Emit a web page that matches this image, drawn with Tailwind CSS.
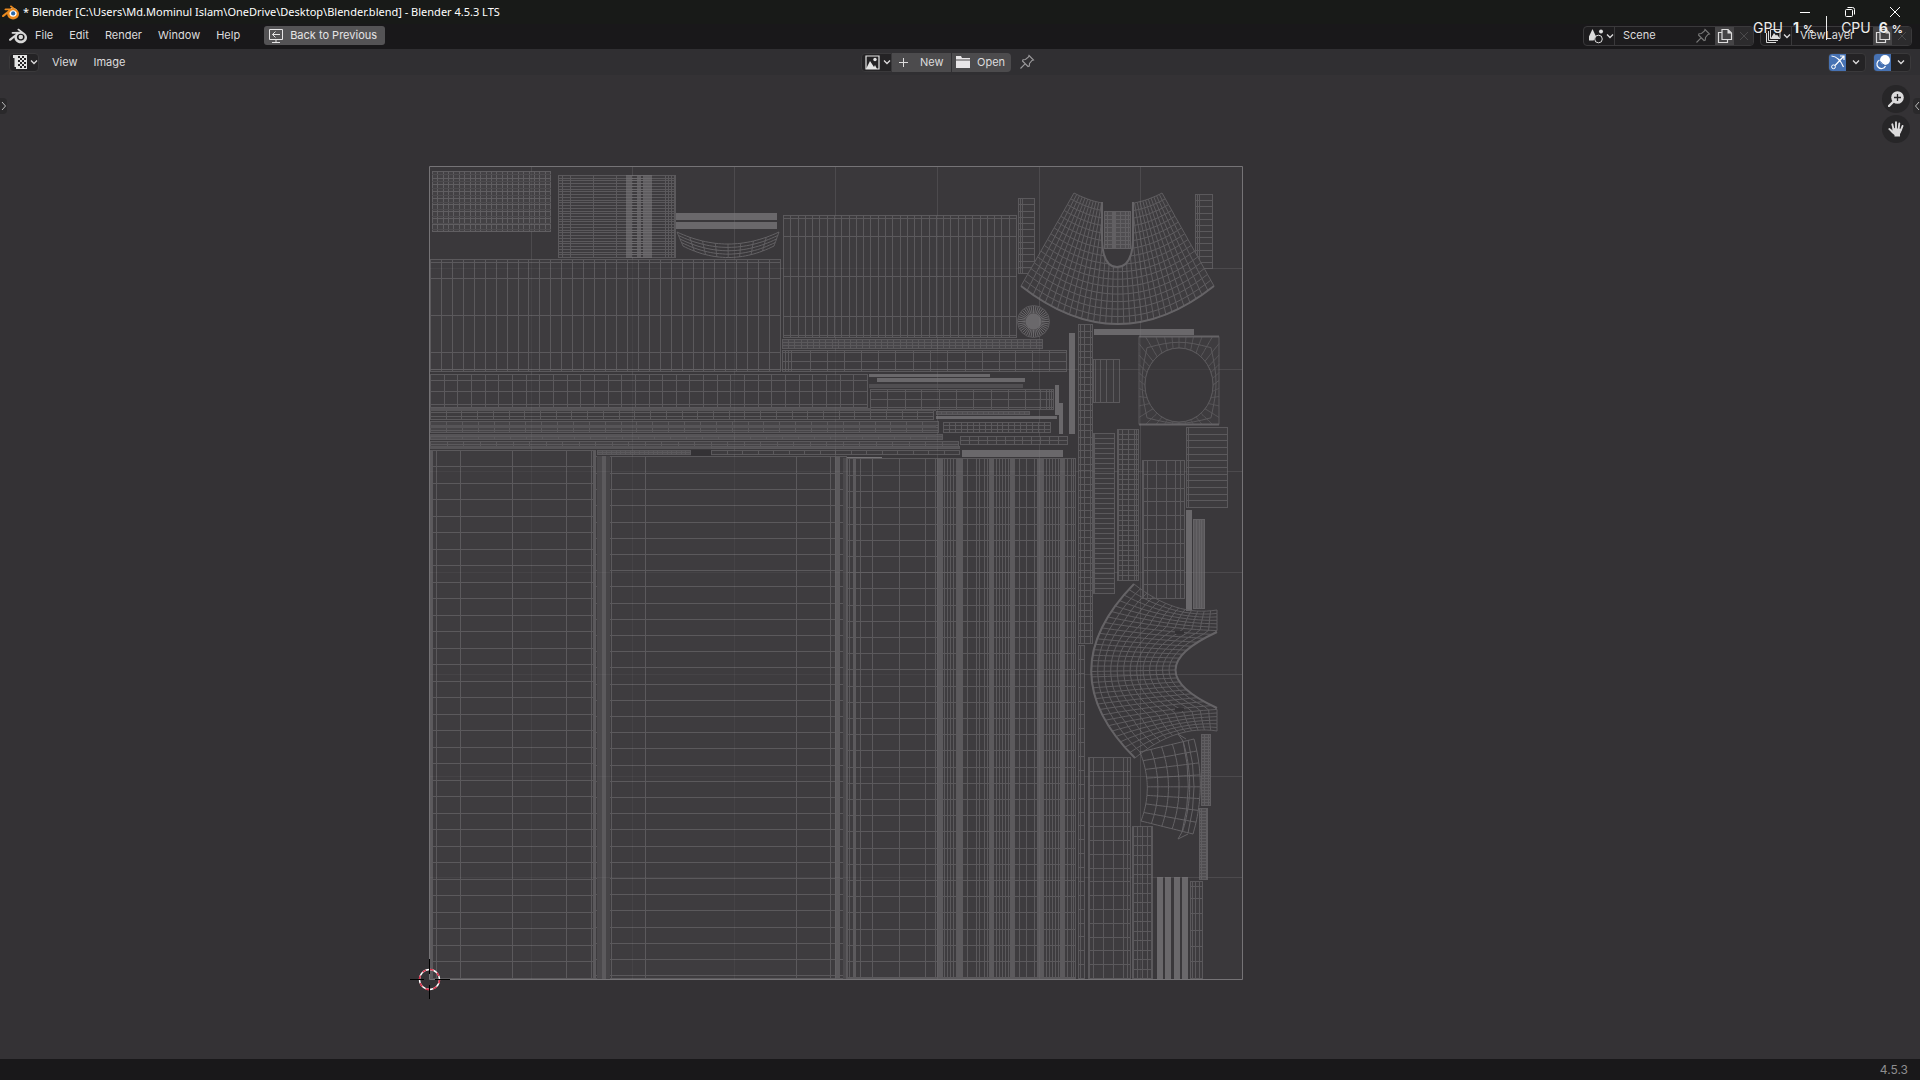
<!DOCTYPE html>
<html lang="en">
<head>
<meta charset="utf-8">
<title>Blender</title>
<script src="https://cdn.jsdelivr.net/npm/@tailwindcss/browser@4"></script>
</head>
<body class="flex h-screen flex-col overflow-hidden bg-[#343235] font-['Inter',sans-serif] text-[11px] text-[#dddcdd]">

<svg class="hidden">
  <defs>
    <symbol id="blender" viewBox="0 0 24 24"><path d="M7.35 14.831c.006.314.106.922.256 1.398a7.372 7.372 0 0 0 1.593 2.757 8.227 8.227 0 0 0 2.787 2.001 8.947 8.947 0 0 0 3.66.76 8.964 8.964 0 0 0 3.657-.772 8.285 8.285 0 0 0 2.785-2.01 7.428 7.428 0 0 0 1.592-2.762 6.964 6.964 0 0 0 .25-3.074 7.123 7.123 0 0 0-1.016-2.779 7.764 7.764 0 0 0-1.852-2.043L13.566 2.55c-.492-.378-1.339-.391-1.88-.013-.547.382-.609 1.015-.123 1.415l3.125 2.544-9.543.01c-.788.001-1.545.518-1.695 1.172-.154.665.38 1.217 1.2 1.22l4.83-.008-8.654 6.642c-.813.622-1.075 1.658-.563 2.315.52.667 1.625.668 2.447.004L7.414 14s-.069.52-.063.831zm12.09 1.741c-.97.988-2.326 1.548-3.795 1.55-1.47.004-2.827-.552-3.797-1.538a4.51 4.51 0 0 1-1.036-1.622 4.282 4.282 0 0 1 .282-3.519 4.702 4.702 0 0 1 1.153-1.371c.942-.768 2.141-1.183 3.396-1.185 1.256-.002 2.455.41 3.398 1.175.48.391.87.854 1.152 1.367a4.28 4.28 0 0 1 .522 1.706 4.236 4.236 0 0 1-.239 1.811 4.54 4.54 0 0 1-1.035 1.626" fill="currentColor"/><circle cx="15.75" cy="13.3" r="3" fill="var(--eye, currentColor)"/></symbol>
    <symbol id="chev" viewBox="0 0 8 8"><path d="M1 2.500 4 5.500 7 2.500" fill="none" stroke="currentColor" stroke-width="1.300"/></symbol>
    <symbol id="pin" viewBox="0 0 16 16"><path d="M10 1.500 14.500 6 13 6.500 10.500 9.500 10.300 12 9 12.500 3.500 7 4 5.700 6.500 5.500 9.500 3ZM5.800 10.200 1.500 14.500" fill="none" stroke="currentColor" stroke-width="1.100"/></symbol>
    <symbol id="copy" viewBox="0 0 16 16"><path d="M4.500 4.500H1.500V14.500H10.500V12M5 1.500H11L14.500 5V11.500H5Z" fill="none" stroke="currentColor" stroke-width="1.200"/><path d="M10.500 1V5.500H15Z" fill="currentColor"/></symbol>
    <symbol id="cross" viewBox="0 0 16 16"><path d="M4 4 12 12M12 4 4 12" stroke="currentColor" stroke-width="1"/></symbol>
  </defs>
</svg>

<div class="flex h-6 shrink-0 items-center bg-[#181a18] pr-5 pl-0.5 text-white">
  <svg class="size-[17px] text-[#ea8a1e] [--eye:#2a68a8]"><circle cx="11" cy="9" r="5" fill="#fff"/><use href="#blender"/></svg>
  <h1 class="ml-1 text-[11px] leading-6 font-['Noto_Sans',sans-serif]">* Blender [C:\Users\Md.Mominul Islam\OneDrive\Desktop\Blender.blend] - Blender 4.5.3 LTS</h1>
  <div class="ml-auto flex items-center gap-[35px]">
    <button aria-label="Minimize"><svg class="size-2.5" viewBox="0 0 10 10"><path d="M0 5.500H10" stroke="#fff"/></svg></button>
    <button aria-label="Restore"><svg class="size-2.5" viewBox="0 0 10 10"><path d="M.5 3.500Q.5 2.500 1.500 2.500H6.500Q7.500 2.500 7.500 3.500V8.500Q7.500 9.500 6.500 9.500H1.500Q.5 9.500.5 8.500ZM2.500.5H7.500Q9.500.5 9.500 2.500V7.500" fill="none" stroke="#fff"/></svg></button>
    <button aria-label="Close"><svg class="size-2.5" viewBox="0 0 10 10"><path d="M0 0 10 10M10 0 0 10" stroke="#fff"/></svg></button>
  </div>
</div>

<header class="flex h-[25px] shrink-0 items-center bg-[#19181a] pr-2 pb-0.5 pl-[9px]">
  <button aria-label="Blender menu"><svg class="size-[18px] text-[#d8d8d8]"><use href="#blender"/></svg></button>
  <nav class="ml-2 flex gap-4">
    <button>File</button><button>Edit</button><button>Render</button><button>Window</button><button>Help</button>
  </nav>
  <button class="ml-6 flex h-[19px] items-center gap-1.5 rounded-[3px] bg-[#545355] pr-2 pl-1 text-[#e6e5e6]">
    <svg class="size-4" viewBox="0 0 16 16"><path d="M1.500 1.500H14.500V11.500H1.500ZM8 11.500V14M4 14.500H12M12 6.500H4.500M7.500 3.500 4.500 6.500 7.500 9.500" fill="none" stroke="currentColor"/></svg>
    Back to Previous</button>
  <div class="ml-auto flex h-5 w-[171px] overflow-hidden rounded border border-[#3a393b] bg-[#1d1c1e]">
    <button class="flex w-[31px] shrink-0 items-center gap-0.5 border-r border-[#3a393b] pl-1" aria-label="Browse scene">
      <svg class="size-4" viewBox="0 0 16 16"><path d="M4.500 1 8 8.500 5.500 12.500H1L1 8.500Z" fill="#ddd"/><circle cx="13" cy="3.500" r="2" fill="#ddd"/><circle cx="10.500" cy="11" r="3.800" fill="#1d1c1e" stroke="#ddd"/></svg>
      <svg class="size-2"><use href="#chev"/></svg></button>
    <input class="w-[72px] min-w-0 grow bg-transparent pl-2 outline-none" aria-label="Scene" value="Scene">
    <button class="mr-1 text-[#777]" aria-label="Pin scene"><svg class="size-4"><use href="#pin"/></svg></button>
    <button class="flex w-[19px] items-center justify-center bg-[#454446]" aria-label="New scene"><svg class="size-4"><use href="#copy"/></svg></button>
    <button class="flex w-[19px] items-center justify-center bg-[#2c2b2d] text-[#4b4a4c]" aria-label="Delete scene"><svg class="size-4"><use href="#cross"/></svg></button>
  </div>
  <div class="ml-1.5 flex h-5 w-[152px] overflow-hidden rounded border border-[#3a393b] bg-[#1d1c1e]">
    <button class="flex w-[31px] shrink-0 items-center gap-0.5 border-r border-[#3a393b] pl-1" aria-label="Browse view layer">
      <svg class="size-4" viewBox="0 0 16 16"><path d="M1.500 5V14.500H11M3.500 3V12.500H13M5.500 1.500H15V10.500H5.500Z" fill="none" stroke="#ddd"/><path d="M6 10 9 5 11 7.500 12 6.500 14.500 10Z" fill="#ddd"/></svg>
      <svg class="size-2"><use href="#chev"/></svg></button>
    <input class="w-[72px] min-w-0 grow bg-transparent pl-2 outline-none" aria-label="View layer" value="ViewLayer">
    <button class="flex w-[19px] items-center justify-center bg-[#454446]" aria-label="New view layer"><svg class="size-4"><use href="#copy"/></svg></button>
    <button class="flex w-[19px] items-center justify-center bg-[#2c2b2d] text-[#4b4a4c]" aria-label="Delete view layer"><svg class="size-4"><use href="#cross"/></svg></button>
  </div>
</header>

<div class="flex h-[26px] shrink-0 items-center bg-[#302f32] px-[9px]">
  <div class="flex flex-1 items-center">
    <button class="flex h-[19px] w-[30px] items-center gap-0.5 rounded border border-[#3a393b] bg-[#242325] pl-0.5" aria-label="Editor type">
      <svg class="size-4" viewBox="0 0 16 16"><path d="M1 1H15V15H4V13H2.500V4H1Z" fill="#e4e4e4"/><path d="M6 2H8V4H6ZM10 2H12V4H10ZM8 4H10V6H8ZM12 4H14V6H12ZM6 6H8V8H6ZM10 6H12V8H10ZM8 8H10V10H8ZM12 8H14V10H12ZM6 10H8V12H6ZM10 10H12V12H10ZM8 12H10V14H8ZM12 12H14V14H12Z" fill="#242325"/></svg>
      <svg class="size-2"><use href="#chev"/></svg></button>
    <button class="ml-[13px]">View</button>
    <button class="ml-4">Image</button>
  </div>
  <div class="mr-6 flex items-center">
    <button class="flex h-[19px] w-[31px] items-center gap-[3px] rounded-l border border-[#3a393b] bg-[#242325] pl-[3px]" aria-label="Browse image">
      <svg class="size-[15px]" viewBox="0 0 15 15"><path d="M1 1H14V14H1Z" fill="none" stroke="#e4e4e4" stroke-width="1.200"/><path d="M1 14 5 6 9 12 10 10 12 14Z" fill="#e4e4e4"/><circle cx="10" cy="4.500" r="1.700" fill="#e4e4e4"/></svg>
      <svg class="size-2"><use href="#chev"/></svg></button>
    <button class="flex h-[19px] w-[59px] items-center gap-3 bg-[#4c4b4d] pl-[7px]"><svg class="size-[9px] shrink-0" viewBox="0 0 9 9"><path d="M0 4.500H9M4.500 0V9" stroke="currentColor"/></svg>New</button>
    <button class="ml-px flex h-[19px] w-[59px] items-center gap-[7px] rounded-r bg-[#4c4b4d] pl-1"><svg class="h-3 w-3.5 shrink-0" viewBox="0 0 14 12"><path d="M0 0H5L6 2H14V3.500H0ZM0 4.500H14V12H0Z" fill="#e8e6e8"/></svg>Open</button>
    <button class="ml-2 text-[#9a999b]" aria-label="Pin image"><svg class="size-4"><use href="#pin"/></svg></button>
  </div>
  <div class="flex flex-1 items-center justify-end gap-[7px]">
    <div class="flex h-[19px] w-[38px] overflow-hidden rounded border border-[#3a393b] bg-[#242325]">
      <button class="flex w-[17px] items-center justify-center bg-[#4772b3] text-white" aria-label="Show gizmos"><svg class="size-4" viewBox="0 0 16 16"><path d="M1.500 2Q9 2.500 13.500 13M5 11.500 14 2M10 2H14V6" fill="none" stroke="currentColor" stroke-width="1.200"/><circle cx="3.500" cy="12.800" r="1.900" fill="none" stroke="currentColor"/></svg></button>
      <button class="flex grow items-center justify-center" aria-label="Gizmo options"><svg class="size-2"><use href="#chev"/></svg></button>
    </div>
    <div class="flex h-[19px] w-[38px] overflow-hidden rounded border border-[#3a393b] bg-[#242325]">
      <button class="flex w-[17px] items-center justify-center bg-[#4772b3] text-white" aria-label="Show overlays"><svg class="size-4" viewBox="0 0 16 16"><circle cx="10" cy="6" r="5" fill="currentColor"/><path d="M4.500 6A4.500 4.500 0 1 0 10.500 12" fill="none" stroke="currentColor" stroke-width="1.200"/><path d="M5.500 7.500Q7 10.500 9.500 11" fill="none" stroke="#4772b3"/></svg></button>
      <button class="flex grow items-center justify-center" aria-label="Overlay options"><svg class="size-2"><use href="#chev"/></svg></button>
    </div>
  </div>
</div>

<main class="relative min-h-0 grow">
  <svg id="uv" class="block size-full" viewBox="0 75 1920 984" preserveAspectRatio="xMidYMid meet" role="img" aria-label="UV layout"></svg>
  <button class="absolute top-[23px] left-0 flex h-4 w-[7px] items-center justify-center rounded-r bg-[#2a292b]" aria-label="Show toolbar"><svg class="h-2 w-1.5" viewBox="0 0 6 8"><path d="M1 0 4.500 4 1 8" fill="none" stroke="#bbb"/></svg></button>
  <button class="absolute top-[23px] right-0 flex h-4 w-[7px] items-center justify-center rounded-l bg-[#2a292b]" aria-label="Show sidebar"><svg class="h-2 w-1.5" viewBox="0 0 6 8"><path d="M5 0 1.500 4 5 8" fill="none" stroke="#bbb"/></svg></button>
  <div class="absolute top-2.5 right-2.5 flex flex-col gap-0.5">
    <button class="flex size-7 items-center justify-center rounded-full bg-[#272628]" aria-label="Zoom view"><svg class="size-4" viewBox="0 0 16 16"><circle cx="9.500" cy="6.500" r="6.300" fill="#dcdbdc"/><path d="M5.500 10.500 1 15" stroke="#dcdbdc" stroke-width="2.400" stroke-linecap="round"/><path d="M6 6.500H13M9.500 3V10" stroke="#272628" stroke-width="1.300"/></svg></button>
    <button class="flex size-7 items-center justify-center rounded-full bg-[#272628]" aria-label="Move view"><svg class="size-4" viewBox="0 0 16 16"><path d="M5.500 8 4.300 3.300M8 8V1.300M10.600 8 11.300 2.500M13 9 14.500 5M5 11 1.300 8" stroke="#dcdbdc" stroke-width="1.900" stroke-linecap="round"/><path d="M4.500 7 13.800 8Q13.500 11.500 12 13V15.500H6.500V14Q3.500 12 2 9.500L4.500 10Z" fill="#dcdbdc"/></svg></button>
  </div>
</main>

<footer class="flex h-[21px] shrink-0 items-center justify-end bg-[#19181a] pr-3 text-xs text-[#8e8d8f]">4.5.3</footer>

<div class="pointer-events-none absolute top-4 right-[17px] flex h-6 items-center text-sm text-[#ededed] text-shadow-sm">
  <span>GPU</span><span class="ml-2.5 font-bold">1<span class="ml-1 text-[11px]">%</span></span>
  <span class="mr-3.5 ml-3 h-6 w-px bg-[#ededed]"></span>
  <span>CPU</span><span class="ml-2 font-bold">6<span class="ml-1 text-[11px]">%</span></span>
</div>

<script>
const LINE = '#5b595c', BRIGHT = '#6a686b', MID = '#504e51', BASE = '#3a383b', FACE = '#3e3c3f';
const out = [];
const rect = (x0, y0, x1, y1, fill) => out.push(`<path d="M${x0} ${y0}H${x1}V${y1}H${x0}Z" fill="${fill}" shape-rendering="crispEdges"/>`);
const path = (d, stroke = LINE, w = 1) => out.push(`<path d="${d}" fill="none" stroke="${stroke}" stroke-width="${w}"/>`);
const split = (a, b, n) => Array.from({ length: n + 1 }, (_, i) => Math.round(a + (b - a) * i / n));

// Rectangular island: face fill, then vertical edges at xs and horizontal edges at ys.
function island(x0, y0, x1, y1, xs, ys, fill = FACE, stroke = LINE) {
  rect(x0, y0, x1, y1, fill);
  const v = typeof xs === 'number' ? split(x0, x1 - 1, xs) : [x0, ...xs, x1 - 1];
  const h = typeof ys === 'number' ? split(y0, y1 - 1, ys) : [y0, ...ys, y1 - 1];
  path(v.map(x => `M${x + .5} ${y0}V${y1}`).join('') + h.map(y => `M${x0} ${y + .5}H${x1}`).join(''), stroke);
}
// Curved island: f(u, v) gives a point; nu and nv are the cell counts.
function patch(f, nu, nv, stroke = '#646265') {
  const pts = (g, n) => 'M' + Array.from({ length: n + 1 }, (_, i) => g(i / n).map(c => c.toFixed(1)).join(' ')).join('L');
  let d = '';
  for (let i = 0; i <= nu; i++) d += pts(t => f(i / nu, t), 16);
  for (let j = 0; j <= nv; j++) d += pts(t => f(t, j / nv), 32);
  path(d, stroke, 1);
}
const mix = (a, b, t) => [a[0] + (b[0] - a[0]) * t, a[1] + (b[1] - a[1]) * t];
const bez = (a, c, b) => t => mix(mix(a, c, t), mix(c, b, t), t);

// Image bounds and background grid
rect(429, 166, 1243, 980, BASE);
for (let i = 1; i < 8; i++) {
  const o = Math.round(i * 101.6) + .5;
  path(`M${429 + o} 166V979M430 ${166 + o}H1242`, '#454346');
}

// Top row
island(432, 171, 551, 232, 22, 9, '#434144', '#605e61');
path([174, 181, 188, 195, 202, 209, 216, 223, 229].map(y => `M432 ${y}.5H551`).join(''), '#4d4b4e');
island(558, 175, 676, 258, [562, 570, 593, 616, 665, 668, 671, 674], 30);
[[626, 632], [637, 641], [643, 652]].forEach(b => rect(b[0], 175, b[1], 258, '#605e61'));
path(split(175, 257, 30).map(y => `M626 ${y}.5H652`).join(''), '#6c6a6d');
rect(676, 213, 777, 220, BRIGHT);
rect(676, 222, 777, 229, BRIGHT);
{
  const a = bez([677, 232], [728, 256], [779, 232]), b = bez([683, 246], [728, 269], [774, 246]);
  patch((u, v) => mix(a(u), b(u), v), 8, 4);
}
island(430, 259, 781, 372, 32, [262, 278, 315, 352, 369]);
island(783, 215, 1017, 338, 32, [218, 236, 276, 316, 335]);
island(1018, 198, 1035, 274, [1020, 1022], 12);
island(1195, 194, 1213, 269, [1197, 1199], 12);

// Cap
out.push(`<circle cx="1033.5" cy="321.5" r="16" fill="${FACE}" stroke="${LINE}"/><circle cx="1033.5" cy="321.5" r="8" fill="${BRIGHT}"/>`);
{
  let d = '';
  for (let i = 0; i < 40; i++) { const a = i * Math.PI / 20, c = Math.cos(a), s = Math.sin(a); d += `M${1033.5 + 8 * c} ${321.5 + 8 * s}L${1033.5 + 15.5 * c} ${321.5 + 15.5 * s}`; }
  path(d, '#6a686b');
}

// Collar fan with its cut-out
{
  const top = bez([1074, 193], [1118, 216], [1162, 193]), hem = bez([1021, 286], [1118, 362], [1214, 286]);
  out.push(`<path d="M1074 193L1021 286Q1118 362 1214 286L1162 193Q1118 216 1074 193Z" fill="${FACE}"/>`);
  patch((u, v) => mix(top(u), hem(u), v), 32, 16, '#5f5d60');
  path('M1021 286Q1118 362 1214 286', '#656366', 2);
  out.push(`<path d="M1102 195V240Q1103 267 1117 267Q1132 267 1133 240V195Z" fill="${BASE}"/>`);
  path('M1102 202V240Q1103 267 1117 267Q1132 267 1133 240V202', '#656366', 2);
}
island(1104, 211, 1131, 249, [1107, 1112, 1113, 1114, 1115, 1120, 1125, 1128], 9, MID, '#626063');

// Long horizontal strips
island(782, 339, 1043, 349, 42, 3, '#48464a');
island(782, 350, 1067, 372, [785, 788, 791, 810, 827, 844, 861, 878, 895, 913, 930, 947, 965, 982, 999, 1015, 1032, 1049], [352, 361, 369]);
island(430, 374, 868, 408, 32, [380, 391, 404]);
island(430, 410, 934, 420, 32, [412, 416]);
island(430, 421, 939, 433, 32, [425, 427, 430], '#464447');
island(430, 434, 943, 440, 32, [436], MID);
island(430, 441, 959, 449, 32, [444], '#464447');
[[408, 411], [425, 428], [434, 436], [446, 449]].forEach(b => rect(430, b[0], 936, b[1], '#565457'));
island(597, 450, 691, 455, 20, 2, MID);
island(711, 446, 960, 449, 1, 1, '#565457');
island(711, 450, 960, 455, 16, 1);
rect(691, 450, 711, 456, '#343235');

// Short strips beside them
rect(869, 374, 990, 377, BRIGHT);
rect(877, 378, 1025, 382, BRIGHT);
rect(869, 384, 1023, 388, MID);
island(870, 389, 1054, 410, [887, 905, 921, 939, 956, 973, 991, 1008, 1025, 1040, 1046, 1049, 1051], [391, 399, 407]);
rect(1055, 385, 1059, 415, BRIGHT);
rect(1059, 403, 1063, 434, BRIGHT);
island(936, 411, 1030, 415, 18, 1, MID);
rect(936, 416, 1057, 419, BRIGHT);
island(943, 422, 1051, 433, 18, 3);
island(960, 436, 1068, 445, 12, 2);
rect(962, 450, 1063, 457, BRIGHT);
rect(1069, 333, 1075, 434, BRIGHT);
rect(1094, 329, 1194, 335, BRIGHT);

// Large lower panels
const every = (a, step, end) => { const r = []; for (; a < end; a += step) r.push(Math.round(a)); return r; };
island(430, 450, 594, 979, [432, 436, 460, 512, 566, 591], every(466, 16.5, 978));
island(595, 456, 847, 979, [598, 611, 645, 796, 830], every(473, 16.2, 978));
island(847, 458, 1076, 979, [849, 860, 872, 899, 925, ...every(935, 3, 964), 967, 976, 979, 984, 987, ...every(990, 3, 1015), 1019, 1026, 1034, ...every(1037, 3, 1068), 1071, 1073], every(475, 16.2, 978));
[[430, 432, 450], [594, 596, 450], [597, 602, 456, '#4b494c'], [602, 606, 456], [606, 610, 456, '#464447'], [835, 840, 457], [843, 846, 458, '#4b494c'], [853, 856, 458], [937, 943, 458], [957, 963, 458], [989, 994, 458], [1010, 1014, 458], [1037, 1043, 458], [1060, 1064, 458]]
  .forEach(b => rect(b[0], b[2], b[1], 979, b[3] || '#5c5a5d'));
path('M847 457.500H882', '#777578');

// Right-hand columns
island(1078, 324, 1093, 644, [1080, 1084, 1090], 48);
island(1078, 645, 1085, 979, [1080], 24);
island(1093, 359, 1120, 403, [1095, 1100, 1106, 1113], 1);
island(1093, 433, 1115, 594, [1094], 32);
island(1117, 429, 1139, 581, [1118, 1122, 1128, 1134, 1136], 30);
island(1142, 460, 1185, 599, [1143, 1147, 1156, 1166, 1175, 1180], 10);
island(1186, 427, 1228, 508, [1188], 12);
rect(1186, 510, 1192, 611, BRIGHT);
island(1193, 519, 1205, 609, 4, 1, '#5a585b', '#656366');

// Square plate with a round hole
rect(1139, 336, 1219, 425, FACE);
{
  const f = (u, v) => {
    const a = u * 2 * Math.PI, c = Math.cos(a), s = Math.sin(a), m = 1 / Math.max(Math.abs(c), Math.abs(s));
    return mix([1179 + 40 * c * m, 380.5 + 44 * s * m], [1179 + 34 * c, 385 + 37 * s], v);
  };
  patch(f, 36, 2, LINE);
  out.push(`<ellipse cx="1179" cy="385" rx="34" ry="37" fill="${BASE}" stroke="${LINE}"/>`);
  path('M1139 336.500H1219M1139 424.500H1219', '#656366', 2);
}

// Sleeve
{
  const a = bez([1134, 584], [1048, 672], [1135, 758]), c = bez([1217, 632], [1134, 670], [1217, 708]);
  const b = u => u < .2 ? mix([1217, 610], [1217, 632], u / .2) : u > .8 ? mix([1217, 708], [1217, 731], (u - .8) / .2) : c((u - .2) / .6);
  const f = (u, v) => { const p = mix(a(u), b(u), v), k = (1 - 2 * u) ** 3; return [p[0], p[1] + k * 40 * v * (1 - v)]; };
  patch(f, 32, 13, '#5f5d60');
  path('M1134 584Q1048 672 1135 758M1217 632Q1134 670 1217 708', '#656366', 2);
  rect(1175, 631, 1184, 634, '#333134');
  rect(1175, 708, 1184, 711, '#333134');
}
// Front panel
{
  const a = bez([1140, 752], [1154, 787], [1141, 821]), b = bez([1194, 739], [1207, 787], [1193, 834]);
  patch((u, v) => mix(a(u), b(u), v), 8, 5);
  path('M1183 741Q1194 787 1182 832M1188 740Q1200 787 1188 833M1183 741 1178 734 1186 739M1182 832 1178 839 1188 834', '#646265');
}
island(1201, 734, 1211, 806, [1204, 1208], 24, MID, '#605e61');
island(1199, 808, 1208, 880, [1201, 1206], 24, MID, '#605e61');
island(1088, 757, 1131, 979, [1089, 1093, 1103, 1113, 1123, 1127], 16);
island(1132, 826, 1153, 979, [1133, 1137, 1142, 1147, 1151], 16);
[1157, 1165, 1174, 1182].forEach(x => rect(x, 877, x + 6, 979, BRIGHT));
island(1190, 881, 1203, 979, [1192, 1195, 1199], [886, 898, 913, 930, 946, 961]);

// Background grid lines that show through the islands
for (let i = 1; i < 8; i++) {
  const o = Math.round(i * 101.6) + .5;
  path(`M${429 + o} 166V979M430 ${166 + o}H1242`, 'rgba(255,255,255,.04)');
}
path('M429.500 166.500H1242.500V979.500H429.500Z', '#757376');

// 2D cursor
out.push('<circle cx="429.500" cy="979.500" r="10" fill="none" stroke="#fff" stroke-width="1.400"/><circle cx="429.500" cy="979.500" r="10" fill="none" stroke="#d8304a" stroke-width="1.500" stroke-dasharray="3.930 3.930"/>');
path('M429.500 959V974M429.500 985V999M410 979.500H424M435 979.500H450', '#000');

document.getElementById('uv').innerHTML = out.join('');
</script>
</body>
</html>
